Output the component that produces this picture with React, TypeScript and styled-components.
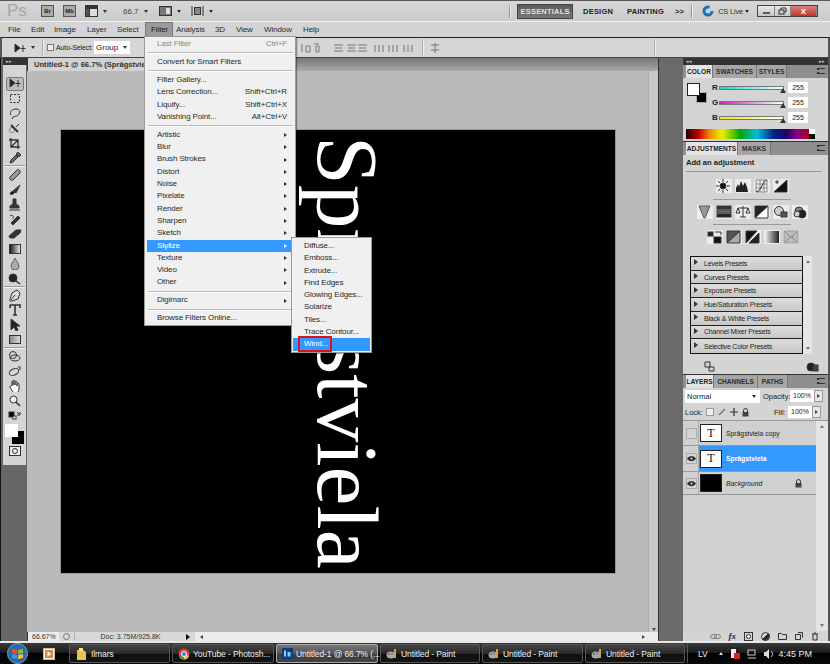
import React from "react";
import styled, { createGlobalStyle } from "styled-components";

const Global = createGlobalStyle`
  html, body { margin: 0; padding: 0; background: #000; }
  * { box-sizing: border-box; }
  #root { width: 830px; height: 664px; overflow: hidden; }
`;

const UI = `"Liberation Sans", Arial, sans-serif`;

const Screen = styled.div`
  position: relative;
  width: 830px;
  height: 664px;
  display: flex;
  flex-direction: column;
  font-family: ${UI};
  font-size: 9px;
  color: #222;
  overflow: hidden;
`;
const Win = styled.div`
  height: 643px;
  display: flex;
  flex-direction: column;
  background: #d2d2d2;
  border-top: 1px solid #5a5a5a;
  border-bottom: 2px solid #e8e8e8;
`;

/* ---------- title bar ---------- */
const TitleBar = styled.div`
  height: 21px;
  display: flex;
  align-items: center;
  background: linear-gradient(#d6d6d6, #cbcbcb);
  border-bottom: 1px solid #f0f0f0;
  position: relative;
`;
const PsLogo = styled.span`
  font: 17px ${UI};
  color: #a6a6a6;
  margin-left: 7px;
  width: 34px;
`;
const AppIconBtn = styled.span`
  width: 13px;
  height: 12px;
  margin-right: 9px;
  border: 1px solid #555;
  background: #aaa;
  font: bold 6px ${UI};
  color: #222;
  display: flex;
  align-items: center;
  justify-content: center;
`;
const TitleGroup = styled.div`
  display: flex;
  align-items: center;
  gap: 5px;
  margin-right: ${(p: { $mr: number }) => p.$mr}px;
  font-size: 8px;
  color: #444;
`;
const Caret = styled.span`
  width: 0;
  height: 0;
  flex: none;
  border-left: 2.5px solid transparent;
  border-right: 2.5px solid transparent;
  border-top: 3px solid ${(p: { $c?: string }) => p.$c || "#333"};
`;
const TitleSpacer = styled.div`
  flex: 1;
`;
const VRule = styled.span`
  width: 2px;
  height: 13px;
  background: #999;
  border-right: 1px solid #eee;
`;
const Workspace = styled.span<{ $on?: boolean; $ml: number }>`
  font: bold 7.5px ${UI};
  letter-spacing: 0.2px;
  margin-left: ${(p) => p.$ml}px;
  color: ${(p) => (p.$on ? "#e4e4e4" : "#222")};
  height: 15px;
  display: flex;
  align-items: center;
  justify-content: center;
  width: ${(p) => (p.$on ? "56px" : "auto")};
  background: ${(p) => (p.$on ? "linear-gradient(#5a5a5a,#777)" : "none")};
  border: ${(p) => (p.$on ? "1px solid #444" : "none")};
`;
const TitleRight = styled.div`
  display: flex;
  align-items: center;
`;
const TitleGap = styled.span<{ $w: number }>`
  width: ${(p) => p.$w}px;
  flex: none;
`;
const CsLive = styled.span`
  font-size: 7.5px;
  letter-spacing: -0.2px;
  color: #333;
  margin-left: 4px;
  display: flex;
  align-items: center;
  gap: 2px;
`;
const WinControls = styled.div`
  display: flex;
  height: 12px;
  margin: 0 12px 0 8px;
  border: 1px solid #444;
`;
const WinCtl = styled.span<{ $w: number; $red?: boolean }>`
  width: ${(p) => p.$w}px;
  display: flex;
  align-items: center;
  justify-content: center;
  color: #fff;
  font: bold 8px ${UI};
  background: ${(p) => (p.$red ? "linear-gradient(#d98080,#c8342c)" : "linear-gradient(#e8e8e8,#c4c4c4)")};
  border-right: 1px solid #888;
`;

/* ---------- menu bar ---------- */
const MenuBar = styled.div`
  height: 15px;
  display: flex;
  align-items: center;
  background: #d4d4d4;
  padding-left: 8px;
`;
const MenuItem = styled.span<{ $w: number; $on?: boolean }>`
  width: ${(p) => p.$w}px;
  height: 15px;
  line-height: 15px;
  font-size: 8px;
  letter-spacing: -0.1px;
  color: #2a2a2a;
  flex: none;
  ${(p) => p.$on && `background:#9a9a9a;border:1px solid #777;border-bottom:none;padding-left:5px;line-height:13px;color:#222;margin-left:-3px;margin-right:3px;`}
`;

/* ---------- options bar ---------- */
const OptionsBar = styled.div`
  height: 21px;
  display: flex;
  align-items: center;
  background: #d6d6d6;
  border-top: 1px solid #222;
  border-bottom: 1px solid #444;
  border-left: 2px solid #555;
  border-right: 2px solid #555;
  position: relative;
`;
const OptSep = styled.span<{ $ml: number }>`
  width: 2px;
  height: 17px;
  margin-left: ${(p) => p.$ml}px;
  background: #aaa;
  border-right: 1px solid #eee;
  flex: none;
`;
const CheckBox = styled.span`
  width: 7px;
  height: 7px;
  border: 1px solid #777;
  background: #eee;
  margin-left: 3px;
  flex: none;
`;
const OptLabel = styled.span`
  font-size: 7px;
  letter-spacing: -0.1px;
  margin-left: 2px;
  width: 38px;
  flex: none;
  white-space: nowrap;
`;
const GroupSelect = styled.span`
  width: 36px;
  height: 13px;
  background: #fff;
  display: flex;
  align-items: center;
  justify-content: space-between;
  padding: 0 3px 0 2px;
  font-size: 8px;
  flex: none;
`;
const AlignIcons = styled.svg<{ $ml: number }>`
  flex: none;
  margin-left: ${(p) => p.$ml}px;
`;
const OptEnd = styled.span`
  width: 172px;
  flex: none;
`;

/* ---------- workspace ---------- */
const Work = styled.div`
  flex: 1;
  display: flex;
  min-height: 0;
  background: #666;
`;
const ToolColumn = styled.div`
  width: 27px;
  flex: none;
  background: #666;
  border-left: 1px solid #111;
  padding-left: 2px;
`;
const PanelHead = styled.div`
  height: 7px;
  flex: none;
  background: #333;
  color: #ccc;
  font-size: 5px;
  line-height: 7px;
  padding: 0 3px;
  display: flex;
  justify-content: space-between;
`;
const Tools = styled.div`
  width: 23px;
  height: 400px;
  background: #d4d4d4;
  padding-top: 11.5px;
  display: flex;
  flex-direction: column;
  align-items: center;
`;
const ToolBtn = styled.span<{ $on?: boolean }>`
  width: 18px;
  height: 14.8px;
  flex: none;
  display: flex;
  align-items: center;
  justify-content: center;
  ${(p) => p.$on && `background:#bcbcbc;border:1px solid #777;border-radius:2px;`}
`;
const ToolSep = styled.span`
  width: 21px;
  height: 2px;
  background: #999;
  border-bottom: 1px solid #f2f2f2;
  flex: none;
`;
const Swatches = styled.div`
  position: relative;
  width: 19px;
  height: 20px;
  margin-top: 1px;
  flex: none;
`;
const SwatchBack = styled.span`
  position: absolute;
  right: 0;
  bottom: 0;
  width: 12px;
  height: 13px;
  background: #000;
`;
const SwatchFront = styled.span`
  position: absolute;
  left: 0;
  top: 0;
  width: 13px;
  height: 13px;
  background: #fff;
`;

const DocColumn = styled.div`
  flex: 1;
  min-width: 0;
  display: flex;
  flex-direction: column;
  background: #bababa;
`;
const DocTabs = styled.div`
  height: 13px;
  flex: none;
  display: flex;
  background: linear-gradient(#777, #a8a8a8);
`;
const DocTab = styled.div`
  width: 117px;
  padding-left: 6px;
  font-size: 7.6px;
  font-weight: bold;
  line-height: 13px;
  background: #d2d2d2;
  white-space: nowrap;
  color: #333;
  border-left: 1px solid #333;
`;
const CanvasRow = styled.div`
  flex: 1;
  min-height: 0;
  display: flex;
`;
const CanvasArea = styled.div`
  flex: 1;
  display: flex;
  align-items: center;
  justify-content: center;
`;
const Canvas = styled.div`
  position: relative;
  width: 554px;
  height: 443px;
  background: #000;
  box-shadow: 0 0 0 1px #999;
`;
const BigText = styled.div`
  position: absolute;
  left: 236px;
  top: 6px;
  writing-mode: vertical-rl;
  font: 87.5px/100px "Liberation Serif", "Times New Roman", serif;
  color: #fff;
  white-space: nowrap;
`;
const VScroll = styled.div`
  width: 10px;
  flex: none;
  background: #c8c8c8;
  border-left: 1px solid #aaa;
  display: flex;
  align-items: flex-end;
  justify-content: center;
  padding-bottom: 1px;
`;
const StatusBar = styled.div`
  height: 9px;
  flex: none;
  display: flex;
  align-items: center;
  background: #d8d8d8;
  border-left: 1px solid #333;
  font-size: 7px;
  color: #333;
  position: relative;
`;
const Zoom = styled.span`
  width: 31px;
  height: 9px;
  line-height: 9px;
  padding-left: 4px;
  background: #ececec;
  flex: none;
`;
const StatusDot = styled.span`
  width: 15px;
  display: flex;
  justify-content: center;
  flex: none;
`;
const DocInfo = styled.span`
  width: 112px;
  text-align: center;
  flex: none;
  border-left: 1px solid #aaa;
`;
const HScroll = styled.div`
  flex: 1;
  height: 9px;
  background: #ececec;
  display: flex;
  align-items: center;
  justify-content: space-between;
  padding: 0 13px 0 5px;
  margin-left: 5px;
`;
const Tri = styled.span<{ $dir: "l" | "r" | "u" | "d"; $s?: number; $c?: string }>`
  width: 0;
  height: 0;
  flex: none;
  ${(p) => {
    const s = p.$s || 2;
    const c = p.$c || "#444";
    if (p.$dir === "r") return `border-top:${s}px solid transparent;border-bottom:${s}px solid transparent;border-left:${s + 1}px solid ${c};`;
    if (p.$dir === "l") return `border-top:${s}px solid transparent;border-bottom:${s}px solid transparent;border-right:${s + 1}px solid ${c};`;
    if (p.$dir === "u") return `border-left:${s}px solid transparent;border-right:${s}px solid transparent;border-bottom:${s + 1}px solid ${c};`;
    return `border-left:${s}px solid transparent;border-right:${s}px solid transparent;border-top:${s + 1}px solid ${c};`;
  }}
`;

const IconStrip = styled.div`
  width: 25px;
  flex: none;
  background: #6a6a6a;
  border-left: 1px solid #333;
`;

/* ---------- right panels ---------- */
const Panels = styled.div`
  width: 147px;
  flex: none;
  background: #d4d4d4;
  display: flex;
  flex-direction: column;
  border-right: 2px solid #555;
`;
const Tabs = styled.div`
  height: 13px;
  display: flex;
  align-items: stretch;
  background: #8f8f8f;
  position: relative;
  flex: none;
  padding-left: 3px;
`;
const Tab = styled.span<{ $on?: boolean; $w: number }>`
  width: ${(p) => p.$w}px;
  font: bold 6.6px/13px ${UI};
  text-align: center;
  white-space: nowrap;
  color: ${(p) => (p.$on ? "#222" : "#2e2e2e")};
  background: ${(p) => (p.$on ? "#e4e4e4" : "#a6a6a6")};
  border-right: 1px solid #777;
  flex: none;
`;
const PanelMenu = styled.span`
  position: absolute;
  right: 3px;
  top: 3px;
  width: 8px;
  height: 6px;
  border-top: 1px solid #333;
  border-bottom: 1px solid #333;
  border-left: 2px dotted #333;
`;
const ColorBody = styled.div`
  height: 63px;
  display: flex;
  flex-direction: column;
  padding: 5px 0 0 4px;
  flex: none;
`;
const ColorTop = styled.div`
  display: flex;
  height: 46px;
`;
const Chips = styled.div`
  position: relative;
  width: 25px;
  flex: none;
`;
const ChipBack = styled.span`
  position: absolute;
  left: 9px;
  top: 9px;
  width: 11px;
  height: 11px;
  background: #000;
  border: 1px solid #aaa;
`;
const ChipFront = styled.span`
  position: absolute;
  left: 0;
  top: 0;
  width: 13px;
  height: 13px;
  background: #fff;
  border: 1px solid #222;
`;
const Sliders = styled.div`
  display: flex;
  flex-direction: column;
  gap: 4px;
  margin-top: -1px;
`;
const SliderRow = styled.div`
  display: flex;
  align-items: center;
  height: 11px;
`;
const SliderLetter = styled.span`
  width: 7px;
  font-weight: bold;
  font-size: 8px;
`;
const SliderTrack = styled.span<{ $c: string }>`
  position: relative;
  width: 65px;
  height: 4px;
  background: linear-gradient(90deg, ${(p) => p.$c}, #fff);
  border: 1px solid #777;
  flex: none;
`;
const Thumb = styled.span`
  position: absolute;
  right: -3px;
  top: 1px;
  width: 0;
  height: 0;
  border-left: 3px solid transparent;
  border-right: 3px solid transparent;
  border-bottom: 5px solid #333;
`;
const NumBox = styled.span`
  width: 20px;
  height: 11px;
  margin-left: 4px;
  background: #fff;
  font-size: 7px;
  line-height: 11px;
  text-align: center;
`;
const Ramp = styled.div`
  position: relative;
  width: 129px;
  height: 10px;
  margin-left: -1px;
  background: linear-gradient(90deg, #200 0%, #c00 10%, #e80 18%, #ee0 28%, #0a0 42%, #0bd 55%, #028 68%, #206 78%, #808 86%, #a00 97%);
`;
const RampEnd = styled.span`
  position: absolute;
  right: 0;
  top: 0;
  width: 6px;
  height: 10px;
  background: linear-gradient(#fff 50%, #000 50%);
`;
const DarkRule = styled.div`
  height: 1px;
  background: #333;
  flex: none;
`;
const AdjBody = styled.div`
  height: 219px;
  display: flex;
  flex-direction: column;
  flex: none;
`;
const AdjTitle = styled.div`
  font: bold 7.6px/12px ${UI};
  padding: 1px 0 0 3px;
  height: 15px;
  margin-top: 1px;
`;
const AdjRule = styled.div<{ $w: number; $ml: number; $mt: number }>`
  height: 1px;
  width: ${(p) => p.$w}px;
  margin: ${(p) => p.$mt}px 0 0 ${(p) => p.$ml}px;
  background: #999;
  flex: none;
`;
const AdjRow = styled.div<{ $mt: number }>`
  display: flex;
  justify-content: center;
  gap: 3px;
  margin: ${(p) => p.$mt}px 6px 0 0;
  height: 14px;
  flex: none;
`;
const AdjIcon = styled.span`
  width: 16px;
  height: 14px;
  background: #ececec;
  display: flex;
  align-items: center;
  justify-content: center;
  flex: none;
`;
const PresetWrap = styled.div`
  display: flex;
  margin: 12px 0 0 7px;
  flex: none;
`;
const PresetList = styled.div`
  width: 113px;
  border: 1px solid #111;
`;
const PresetRow = styled.div`
  height: 13.72px;
  border-bottom: 1px solid #222;
  background: linear-gradient(#dcdcdc, #c8c8c8);
  display: flex;
  align-items: center;
  font-size: 7px;
  letter-spacing: -0.2px;
  color: #222;
  &:last-child { border-bottom: none; }
`;
const PresetArrow = styled.span`
  width: 13px;
  padding-left: 3px;
  display: flex;
  flex: none;
  margin-top: -2px;
`;
const MiniScroll = styled.div`
  width: 9px;
  background: #e6e6e6;
  display: flex;
  flex-direction: column;
  justify-content: space-between;
  align-items: center;
  padding: 4px 0;
`;
const AdjFooter = styled.div`
  display: flex;
  justify-content: space-between;
  padding: 0 9px 0 21px;
  margin-top: 7px;
  height: 11px;
  flex: none;
`;
const LayersBody = styled.div`
  flex: 1;
  display: flex;
  flex-direction: column;
  min-height: 0;
`;
const BlendRow = styled.div`
  height: 16px;
  display: flex;
  align-items: center;
  padding-left: 2px;
  flex: none;
  font-size: 7.5px;
`;
const BlendSelect = styled.span`
  width: 75px;
  height: 13px;
  background: #fff;
  padding: 0 4px 0 2px;
  display: flex;
  align-items: center;
  justify-content: space-between;
  flex: none;
  margin-right: 3px;
`;
const SmallLabel = styled.span<{ $w: number }>`
  width: ${(p) => p.$w}px;
  flex: none;
  white-space: nowrap;
`;
const PctBox = styled.span`
  width: 24px;
  height: 12px;
  line-height: 12px;
  font-size: 7px;
  background: #fff;
  text-align: center;
  flex: none;
`;
const PctBtn = styled.span`
  width: 9px;
  height: 12px;
  background: #e8e8e8;
  border: 1px solid #999;
  display: flex;
  align-items: center;
  justify-content: center;
  flex: none;
`;
const LockRow = styled(BlendRow)`
  border-bottom: 1px solid #999;
  height: 17px;
`;
const LockIcons = styled.div`
  display: flex;
  align-items: center;
  gap: 4px;
  margin-left: 3px;
  width: 68px;
  flex: none;
`;
const LayersScroll = styled.div`
  flex: 1;
  min-height: 0;
  display: flex;
`;
const LayerList = styled.div`
  flex: 1;
  background: #d0d0d0;
`;
const LayerRow = styled.div<{ $h: number }>`
  height: ${(p) => p.$h}px;
  display: flex;
  align-items: center;
  border-bottom: 1px solid #999;
`;
const EyeCell = styled.span`
  width: 15px;
  flex: none;
  display: flex;
  justify-content: center;
  padding-left: 2px;
`;
const EyeBox = styled.span`
  width: 11px;
  height: 11px;
  background: #d4d4d4;
  border: 1px solid #aaa;
  display: flex;
  align-items: center;
  justify-content: center;
`;
const LayerMain = styled.div<{ $on?: boolean }>`
  flex: 1;
  height: 100%;
  display: flex;
  align-items: center;
  padding-left: 1px;
  border-left: 1px solid #aaa;
  position: relative;
  background: ${(p) => (p.$on ? "#3399ff" : "none")};
`;
const Thumbnail = styled.span<{ $black?: boolean; $on?: boolean }>`
  width: 22px;
  height: 18px;
  border: 1px solid #222;
  background: ${(p) => (p.$black ? "#000" : "#fff")};
  display: flex;
  align-items: center;
  justify-content: center;
  font: 12px "Liberation Serif", serif;
  color: #111;
  flex: none;
  ${(p) => p.$on && `outline:1px solid #fff;outline-offset:-2px;`}
`;
const LayerName = styled.span<{ $on?: boolean; $italic?: boolean }>`
  margin-left: 4px;
  font-size: 6.8px;
  font-weight: ${(p) => (p.$on ? "bold" : "normal")};
  font-style: ${(p) => (p.$italic ? "italic" : "normal")};
  color: ${(p) => (p.$on ? "#fff" : "#222")};
`;
const LockBadge = styled.span`
  position: absolute;
  right: 14px;
  top: 7px;
`;
const ScrollCol = styled.div`
  width: 12px;
  background: #e4e4e4;
  flex: none;
  display: flex;
  flex-direction: column;
  justify-content: space-between;
  align-items: center;
  padding: 4px 0;
`;
const LayersFooter = styled.div`
  height: 10px;
  display: flex;
  align-items: center;
  justify-content: flex-end;
  gap: 8px;
  padding-right: 9px;
  background: #d4d4d4;
  flex: none;
  font: italic bold 9px "Liberation Serif", serif;
`;

/* ---------- taskbar ---------- */
const Taskbar = styled.div`
  flex: 1;
  display: flex;
  align-items: center;
  background: linear-gradient(#3a3a3a 0%, #1c1c1c 45%, #000 50%, #0a0a0a 100%);
`;
const Orb = styled.span`
  width: 25px;
  height: 21px;
  margin: 0 13px 0 5px;
  display: flex;
  flex: none;
`;
const Quick = styled.span`
  width: 26px;
  flex: none;
  display: flex;
`;
const TaskBtn = styled.div<{ $on?: boolean; $w: number }>`
  width: ${(p) => p.$w}px;
  height: 19px;
  margin-right: 2px;
  flex: none;
  display: flex;
  align-items: center;
  gap: 3px;
  padding-left: 5px;
  font-size: 8.5px;
  letter-spacing: -0.1px;
  color: #eee;
  white-space: nowrap;
  border: 1px solid ${(p) => (p.$on ? "#aaa" : "#555")};
  border-radius: 2px;
  background: ${(p) =>
    p.$on
      ? "linear-gradient(#777,#555 50%,#3c3c3c 50%,#444)"
      : "linear-gradient(#444,#2a2a2a 50%,#0c0c0c 50%,#161616)"};
`;
const Tray = styled.div`
  flex: 1;
  height: 19px;
  display: flex;
  align-items: center;
  color: #eee;
  font-size: 8.5px;
  border-left: 1px solid #555;
  padding-left: 10px;
`;
const TrayClock = styled.span`
  margin-left: auto;
  margin-right: 18px;
  font-size: 9px;
`;
const TrayIcons = styled.div`
  display: flex;
  align-items: center;
  gap: 7px;
  margin-left: 11px;
`;

/* ---------- menus (over content) ---------- */
const Menu = styled.div<{ $x: number; $y: number; $w: number; $h: number; $pt: number }>`
  position: absolute;
  left: ${(p) => p.$x}px;
  top: ${(p) => p.$y}px;
  width: ${(p) => p.$w}px;
  height: ${(p) => p.$h}px;
  background: #f0f0f0;
  border: 1px solid #999;
  box-shadow: 1px 1px 1px rgba(0, 0, 0, 0.35);
  font-size: 8px;
  letter-spacing: -0.12px;
  color: #2a2a2a;
  padding-top: ${(p) => p.$pt}px;
  z-index: 2;
`;
const Row = styled.div<{ $on?: boolean; $off?: boolean; $pl?: number }>`
  height: 12.3px;
  line-height: 12.3px;
  margin: 0 2px;
  padding: 0 6px 0 ${(p) => p.$pl ?? 10}px;
  display: flex;
  justify-content: space-between;
  align-items: center;
  white-space: nowrap;
  color: ${(p) => (p.$off ? "#8a8a8a" : p.$on ? "#fff" : "#2a2a2a")};
  background: ${(p) => (p.$on ? "#3399ff" : "none")};
`;
const Sep = styled.div`
  height: 2px;
  margin: 1.85px 2px 1.85px 3px;
  background: #bbb;
  border-bottom: 1px solid #fff;
`;
const WindRow = styled(Row)`
  margin: 0 1px;
  position: relative;
`;
const RedBox = styled.span`
  position: absolute;
  left: 5px;
  top: -2px;
  width: 34px;
  height: 16px;
  border: 2.5px solid #e0101c;
`;

/* ---------- icons ---------- */
const Svg = ({ w = 14, h = 13, children }: { w?: number; h?: number; children: React.ReactNode }) => (
  <svg width={w} height={h} viewBox={`0 0 ${w} ${h}`} fill="none" stroke="#333" strokeWidth="1">
    {children}
  </svg>
);

const toolShapes: Record<string, React.ReactNode> = {
  move: <><path d="M2 2l5 4-5 4z" fill="#222" /><path d="M10 3v7M7.500 6.500h5" /></>,
  marquee: <rect x="2.500" y="2.500" width="9" height="8" strokeDasharray="2 1.500" />,
  lasso: <path d="M3 8C1 4 5 2 8 2s5 2 3 5-5 2-6 3l-1 2" />,
  quick: <><path d="M3 3l7 7" strokeWidth="2" /><circle cx="4" cy="8" r="2.500" strokeDasharray="1 1" /><path d="M11 2l-3 3" /></>,
  crop: <path d="M3 1v9h9M1 3h9v9M3 10l7-7" strokeWidth="1.300" />,
  drop: <path d="M2 12l1-3 5-5 2 2-5 5zM8 3l2-2 3 3-2 2z" fill="#666" />,
  heal: <path d="M2 9l7-7c2-1 4 1 3 3l-7 7c-2 1-4-1-3-3z" fill="#999" />,
  brush: <><path d="M5 8l7-6-4 8z" fill="#333" /><path d="M2 11c1-3 3-3 4-2s-1 3-4 2z" fill="#111" /></>,
  stamp: <path d="M5 1h3v5l3 2v2H2V8l3-2zM1 12h11" fill="#333" />,
  history: <><path d="M3 10l7-7 2 2-7 7z" fill="#333" /><path d="M2 3c3-2 4 1 3 3" /></>,
  eraser: <path d="M1 9l7-6h5l-1 3-6 5H2z" fill="#333" />,
  gradient: <><defs><linearGradient id="tg"><stop offset="0" stopColor="#111" /><stop offset="1" stopColor="#eee" /></linearGradient></defs><rect x="1.500" y="2.500" width="11" height="9" fill="url(#tg)" /></>,
  blur: <path d="M7 1c1 3 4 5 4 8a4 4 0 01-8 0c0-3 3-5 4-8z" fill="#aaa" stroke="#666" />,
  burn: <><circle cx="5" cy="6" r="4" fill="#222" /><path d="M8 9l4 3" strokeWidth="1.500" /></>,
  pen: <path d="M9 1l3 3-2 6-6 2-2 0 0-2 2-6zM3 11l4-5" fill="#ddd" />,
  type: <path d="M2 2h10v3M2 2v3M7 2v10M5 12h4" strokeWidth="1.600" />,
  arrow: <path d="M3 1l9 7-4 0 2 4-2 1-2-4-3 3z" fill="#222" />,
  rect: <><defs><linearGradient id="tr"><stop offset="0" stopColor="#888" /><stop offset="1" stopColor="#ddd" /></linearGradient></defs><rect x="1.500" y="2.500" width="11" height="8" fill="url(#tr)" /></>,
  rot: <><circle cx="5" cy="5" r="3.500" /><ellipse cx="7" cy="8" rx="5" ry="3" /></>,
  orbit: <><ellipse cx="6" cy="7" rx="5" ry="3" transform="rotate(-25 6 7)" /><path d="M10 2h3M11 4h2" /></>,
  hand: <path d="M4 7V3c0-1 1-1 1 0v3-4c0-1 2-1 2 0v4-3c0-1 2-1 2 0v4-2c0-1 2-1 2 0v5c0 3-2 4-4 4S4 11 2 8c0-1 1-2 2-1z" fill="#fff" />,
  zoom: <><circle cx="5.500" cy="5.500" r="3.500" fill="#eee" /><path d="M8 8l4 4" strokeWidth="1.600" /></>,
  mini: <><rect x="1" y="3" width="5" height="5" fill="#000" /><rect x="5" y="7" width="3" height="3" fill="#fff" /><path d="M9 3l3 3M12 3v3H9" /></>,
};

const Tool = ({ n, on }: { n: string; on?: boolean }) => (
  <ToolBtn $on={on}>
    <Svg>{toolShapes[n]}</Svg>
  </ToolBtn>
);

const adjIcons: React.ReactNode[][] = [
  [
    <><circle cx="7" cy="7" r="3" fill="#111" /><path d="M7 0v3M7 11v3M0 7h3M11 7h3M2 2l2 2M10 10l2 2M2 12l2-2M10 4l2-2" /></>,
    <path d="M1 13V9l2-4 1 3 2-6 2 5 2-4 2 5 1 5z" fill="#222" stroke="none" />,
    <><path d="M2 1h11v12H2zM2 5h11M2 9h11M6 1v12M10 1v12" stroke="#888" /><path d="M2 13c6-1 6-11 11-12" /></>,
    <><path d="M1 13L14 1v12z" fill="#111" /><path d="M2 3h4M4 1v4" /></>,
  ],
  [
    <path d="M2 1h11L8 13H7z" fill="#999" stroke="#555" />,
    <><rect x="1" y="1" width="14" height="3" fill="#333" /><rect x="1" y="5" width="14" height="3" fill="#777" /><rect x="1" y="9" width="14" height="3" fill="#222" /></>,
    <path d="M8 1v11M3 3h10M3 3l-2 5h4zM13 3l-2 5h4zM5 12h6" />,
    <><path d="M1 13L14 1H1z" fill="#222" /><path d="M14 1v12H1z" fill="#fff" /></>,
    <><circle cx="6" cy="6" r="4.500" fill="#ccc" /><rect x="8" y="7" width="6" height="5" fill="#555" /></>,
    <><circle cx="7" cy="6" r="4" fill="#888" /><circle cx="10" cy="9" r="4" fill="#222" /><circle cx="5" cy="9" r="3" fill="#ccc" /></>,
  ],
  [
    <><rect x="1" y="2" width="5" height="4" fill="#222" /><rect x="7" y="7" width="7" height="6" fill="#111" /><path d="M8 2h6v3" /></>,
    <><path d="M1 13L14 1H1z" fill="#555" /><path d="M14 1v12H1z" fill="#aaa" /></>,
    <><path d="M1 13L12 1H1z" fill="#111" /><path d="M14 3L4 13h10z" fill="#222" /></>,
    <><defs><linearGradient id="ag"><stop offset="0" stopColor="#eee" /><stop offset="1" stopColor="#222" /></linearGradient></defs><rect x="1" y="1" width="14" height="12" fill="url(#ag)" stroke="none" /></>,
    <path d="M1 1l6 6-6 6zM15 1l-6 6 6 6zM1 1h14L8 7zM1 13h14L8 7z" fill="#bbb" stroke="#999" />,
  ],
];

const presets = ["Levels Presets", "Curves Presets", "Exposure Presets", "Hue/Saturation Presets", "Black & White Presets", "Channel Mixer Presets", "Selective Color Presets"];

const Eye = () => (
  <svg width="9" height="7" viewBox="0 0 9 7">
    <path d="M0 3.500C2 0 7 0 9 3.500 7 7 2 7 0 3.500z" fill="#333" />
    <circle cx="4.500" cy="3.500" r="1" fill="#ddd" />
  </svg>
);
const Padlock = () => (
  <svg width="7" height="9" viewBox="0 0 7 9">
    <path d="M1.500 4V2.500a2 2 0 014 0V4" fill="none" stroke="#333" />
    <rect x="0.500" y="4" width="6" height="4.500" fill="#444" />
  </svg>
);
const PaintIcon = () => (
  <svg width="12" height="12" viewBox="0 0 12 12" style={{ flex: "none" }}>
    <ellipse cx="5" cy="7" rx="4.500" ry="3.500" fill="#9ab0a8" />
    <circle cx="3" cy="6" r="1" fill="#d33" />
    <circle cx="6" cy="5.500" r="1" fill="#38c" />
    <rect x="8" y="1" width="2" height="9" fill="#d9a13a" />
  </svg>
);

const fileItems: React.ReactNode = (
  <svg width="13" height="14" viewBox="0 0 13 14" style={{ flex: "none" }}>
    <path d="M2 3h6l3 2v8H2z" fill="#e8c34a" />
    <path d="M4 1h4v3H4z" fill="#f4e7a6" />
  </svg>
);

const rows1 = ["Artistic", "Blur", "Brush Strokes", "Distort", "Noise", "Pixelate", "Render", "Sharpen", "Sketch", "Stylize", "Texture", "Video", "Other"];
const rows2 = ["Diffuse...", "Emboss...", "Extrude...", "Find Edges", "Glowing Edges...", "Solarize", "Tiles...", "Trace Contour..."];
const menus: [string, number, boolean?][] = [
  ["File", 23], ["Edit", 23], ["Image", 33], ["Layer", 30], ["Select", 31], ["Filter", 28, true],
  ["Analysis", 39], ["3D", 21], ["View", 28], ["Window", 39], ["Help", 20],
];

export default function App() {
  return (
    <Screen>
      <Global />
      <Win>
        <TitleBar>
          <PsLogo>Ps</PsLogo>
          <AppIconBtn>Br</AppIconBtn>
          <AppIconBtn>Mb</AppIconBtn>
          <TitleGroup $mr={16}>
            <Svg w={13} h={12}><rect x="0.500" y="0.500" width="12" height="11" fill="#ddd" /><rect x="0.500" y="0.500" width="12" height="3" fill="#333" /><rect x="0.500" y="3.500" width="4" height="8" fill="#555" /></Svg>
            <Caret />
          </TitleGroup>
          <TitleGroup $mr={11}>66.7 <Caret /></TitleGroup>
          <TitleGroup $mr={10}>
            <Svg w={13} h={12}><rect x="0.500" y="1.500" width="12" height="9" fill="#777" /><rect x="7" y="3" width="4" height="6" fill="#ddd" stroke="none" /></Svg>
            <Caret />
          </TitleGroup>
          <TitleGroup $mr={0}>
            <Svg w={13} h={12}><path d="M1 1v10M12 1v10" /><rect x="3.500" y="2.500" width="6" height="7" fill="#888" /></Svg>
            <Caret />
          </TitleGroup>
          <TitleSpacer />
          <TitleRight>
            <VRule />
            <Workspace $on $ml={6}>ESSENTIALS</Workspace>
            <Workspace $ml={10}>DESIGN</Workspace>
            <Workspace $ml={14}>PAINTING</Workspace>
            <Workspace $ml={11}>&gt;&gt;</Workspace>
            <TitleGap $w={7} />
            <VRule />
            <TitleGap $w={9} />
            <Svg w={12} h={12}><circle cx="6" cy="6" r="4" stroke="#1277b8" strokeWidth="3" strokeDasharray="20 6" /></Svg>
            <CsLive>CS Live <Caret /></CsLive>
            <WinControls>
              <WinCtl $w={17}><Svg w={9} h={5}><path d="M1 4h7" strokeWidth="1.500" /></Svg></WinCtl>
              <WinCtl $w={16}><Svg w={9} h={8}><rect x="1" y="3" width="5" height="4" /><path d="M3 3V1h5v4H6" /></Svg></WinCtl>
              <WinCtl $w={26} $red>X</WinCtl>
            </WinControls>
          </TitleRight>
        </TitleBar>
        <MenuBar>
          {menus.map(([t, w, on]) => (
            <MenuItem key={t} $w={w} $on={on}>{t}</MenuItem>
          ))}
        </MenuBar>
        <OptionsBar>
          <TitleGap $w={11} />
          <Svg w={14} h={12}>{toolShapes.move}</Svg>
          <TitleGap $w={4} />
          <Caret />
          <OptSep $ml={7} />
          <CheckBox />
          <OptLabel>Auto-Select:</OptLabel>
          <GroupSelect>Group <Caret /></GroupSelect>
          <AlignIcons $ml={170} width="122" height="12" viewBox="0 0 122 12" stroke="#777" fill="none">
            <path d="M2 2v8M6 4h4v6H6zM14 2h5M16 4h3v6h-3z" />
            <path d="M34 3h9M35 6h7M34 9h9M47 3h9M48 6h7M47 9h9M58 3h9M59 6h7M58 9h9" />
            <path d="M75 3v7M79 3v7M83 3v7M89 3v7M93 3v7M97 3v7M104 3v7M108 3v7M112 3v7" />
          </AlignIcons>
          <OptSep $ml={0} />
          <AlignIcons $ml={5} width="12" height="12" viewBox="0 0 12 12" stroke="#777" fill="none"><path d="M6 1v10M2 3h8M2 8h8" /></AlignIcons>
          <TitleSpacer />
          <OptSep $ml={0} />
          <OptEnd />
        </OptionsBar>
        <Work>
          <ToolColumn>
            <PanelHead>▸▸</PanelHead>
            <Tools>
              <Tool n="move" on />
              <Tool n="marquee" />
              <Tool n="lasso" />
              <Tool n="quick" />
              <Tool n="crop" />
              <Tool n="drop" />
              <ToolSep />
              <Tool n="heal" />
              <Tool n="brush" />
              <Tool n="stamp" />
              <Tool n="history" />
              <Tool n="eraser" />
              <Tool n="gradient" />
              <Tool n="blur" />
              <Tool n="burn" />
              <ToolSep />
              <Tool n="pen" />
              <Tool n="type" />
              <Tool n="arrow" />
              <Tool n="rect" />
              <ToolSep />
              <Tool n="rot" />
              <Tool n="orbit" />
              <Tool n="hand" />
              <Tool n="zoom" />
              <Tool n="mini" />
              <Swatches><SwatchBack /><SwatchFront /></Swatches>
              <ToolBtn>
                <Svg w={14} h={12}><rect x="1.500" y="1.500" width="11" height="9" fill="#eee" /><circle cx="7" cy="6" r="2.500" /></Svg>
              </ToolBtn>
            </Tools>
          </ToolColumn>
          <DocColumn>
            <DocTabs>
              <DocTab>Untitled-1 @ 66.7% (Sprāgstviela</DocTab>
            </DocTabs>
            <CanvasRow>
              <CanvasArea>
                <Canvas>
                  <BigText>Sprāgstviela</BigText>
                </Canvas>
              </CanvasArea>
              <VScroll><Tri $dir="d" /></VScroll>
            </CanvasRow>
            <StatusBar>
              <Zoom>66.67%</Zoom>
              <StatusDot><Svg w={7} h={7}><circle cx="3.500" cy="3.500" r="3" stroke="#777" /></Svg></StatusDot>
              <DocInfo>Doc: 3.75M/925.8K</DocInfo>
              <Tri $dir="r" $s={3} $c="#000" />
              <HScroll><Tri $dir="l" /><Tri $dir="r" /></HScroll>
            </StatusBar>
          </DocColumn>
          <IconStrip />
          <Panels>
            <PanelHead><span>◂◂</span><span>▸▸</span></PanelHead>
            <Tabs>
              <Tab $on $w={27}>COLOR</Tab>
              <Tab $w={44}>SWATCHES</Tab>
              <Tab $w={30}>STYLES</Tab>
              <PanelMenu />
            </Tabs>
            <ColorBody>
              <ColorTop>
                <Chips><ChipBack /><ChipFront /></Chips>
                <Sliders>
                  {[["R", "#12d4d4"], ["G", "#d61fc0"], ["B", "#efe60f"]].map(([l, c]) => (
                    <SliderRow key={l}>
                      <SliderLetter>{l}</SliderLetter>
                      <SliderTrack $c={c}><Thumb /></SliderTrack>
                      <NumBox>255</NumBox>
                    </SliderRow>
                  ))}
                </Sliders>
              </ColorTop>
              <Ramp><RampEnd /></Ramp>
            </ColorBody>
            <DarkRule />
            <Tabs>
              <Tab $on $w={52}>ADJUSTMENTS</Tab>
              <Tab $w={33}>MASKS</Tab>
              <PanelMenu />
            </Tabs>
            <AdjBody>
              <AdjTitle>Add an adjustment</AdjTitle>
              <AdjRule $w={136} $ml={3} $mt={0} />
              {adjIcons.map((row, i) => (
                <React.Fragment key={i}>
                  <AdjRow $mt={i === 0 ? 7 : 5}>
                    {row.map((ic, j) => (
                      <AdjIcon key={j}><Svg w={16} h={14}>{ic}</Svg></AdjIcon>
                    ))}
                  </AdjRow>
                  {i < 2 && <AdjRule $w={78} $ml={30} $mt={5.5} />}
                </React.Fragment>
              ))}
              <PresetWrap>
                <PresetList>
                  {presets.map((p) => (
                    <PresetRow key={p}>
                      <PresetArrow><Tri $dir="r" $s={3} $c="#334" /></PresetArrow>
                      {p}
                    </PresetRow>
                  ))}
                </PresetList>
                <MiniScroll><Tri $dir="u" $c="#777" /><Tri $dir="d" $c="#777" /></MiniScroll>
              </PresetWrap>
              <AdjFooter>
                <Svg w={11} h={11}><path d="M1 1h5v5H1zM5 6h5v4H5z" /></Svg>
                <Svg w={13} h={11}><circle cx="5" cy="6" r="4" fill="#222" /><rect x="7" y="4" width="5" height="6" fill="#444" /></Svg>
              </AdjFooter>
            </AdjBody>
            <DarkRule />
            <Tabs>
              <Tab $on $w={28}>LAYERS</Tab>
              <Tab $w={44}>CHANNELS</Tab>
              <Tab $w={30}>PATHS</Tab>
              <PanelMenu />
            </Tabs>
            <LayersBody>
              <BlendRow>
                <BlendSelect>Normal <Caret /></BlendSelect>
                <SmallLabel $w={27}>Opacity:</SmallLabel>
                <PctBox>100%</PctBox>
                <PctBtn><Tri $dir="r" /></PctBtn>
              </BlendRow>
              <LockRow>
                <SmallLabel $w={18}>Lock:</SmallLabel>
                <LockIcons>
                  <Svg w={8} h={8}><rect x="0.500" y="0.500" width="7" height="7" fill="#eee" stroke="#999" /></Svg>
                  <Svg w={8} h={8}><path d="M1 7l6-6" stroke="#777" strokeWidth="1.500" /></Svg>
                  <Svg w={8} h={8}><path d="M4 0v8M0 4h8" strokeWidth="1.200" /></Svg>
                  <Padlock />
                </LockIcons>
                <SmallLabel $w={14}>Fill:</SmallLabel>
                <PctBox>100%</PctBox>
                <PctBtn><Tri $dir="r" /></PctBtn>
              </LockRow>
              <LayersScroll>
                <LayerList>
                  <LayerRow $h={25}>
                    <EyeCell><EyeBox /></EyeCell>
                    <LayerMain><Thumbnail>T</Thumbnail><LayerName>Sprāgstviela copy</LayerName></LayerMain>
                  </LayerRow>
                  <LayerRow $h={26}>
                    <EyeCell><EyeBox><Eye /></EyeBox></EyeCell>
                    <LayerMain $on><Thumbnail $on>T</Thumbnail><LayerName $on>Sprāgstviela</LayerName></LayerMain>
                  </LayerRow>
                  <LayerRow $h={23}>
                    <EyeCell><EyeBox><Eye /></EyeBox></EyeCell>
                    <LayerMain><Thumbnail $black /><LayerName $italic>Background</LayerName><LockBadge><Padlock /></LockBadge></LayerMain>
                  </LayerRow>
                </LayerList>
                <ScrollCol><Tri $dir="u" $c="#777" /><Tri $dir="d" $c="#777" /></ScrollCol>
              </LayersScroll>
              <LayersFooter>
                <Svg w={11} h={7}><ellipse cx="3.500" cy="3.500" rx="3" ry="2" stroke="#777" /><ellipse cx="7.500" cy="3.500" rx="3" ry="2" stroke="#777" /></Svg>
                <span>fx</span>
                <Svg w={9} h={9}><rect x="0.500" y="0.500" width="8" height="8" /><circle cx="4.500" cy="4.500" r="2" fill="#fff" /></Svg>
                <Svg w={9} h={9}><circle cx="4.500" cy="4.500" r="4" /><path d="M1.500 7.500l6-6 1 3-3 3.500z" fill="#222" /></Svg>
                <Svg w={9} h={8}><path d="M0.500 1.500h3l1 1h4v5h-8z" /></Svg>
                <Svg w={8} h={8}><path d="M0.500 2.500h5v5h-5zM3 0.500h4.500v5" /></Svg>
                <Svg w={8} h={9}><path d="M1 2h6M2 2v6h4V2M3 1h2" /></Svg>
              </LayersFooter>
            </LayersBody>
          </Panels>
        </Work>
      </Win>
      <Taskbar>
        <Orb>
          <svg width="25" height="21" viewBox="0 0 25 21">
            <circle cx="12.500" cy="10.500" r="10" fill="#2a6aa8" stroke="#7aa" />
            <path d="M7 6l5 1v4l-5-1z" fill="#e2512c" />
            <path d="M13 7l5-1v4l-5 1z" fill="#7fc241" />
            <path d="M7 11l5 1v4l-5-1z" fill="#3b9be0" />
            <path d="M13 12l5-1v4l-5 1z" fill="#f5c12c" />
          </svg>
        </Orb>
        <Quick>
          <svg width="12" height="12" viewBox="0 0 12 12">
            <rect x="0.500" y="0.500" width="11" height="11" fill="#f5f5f5" stroke="#bbb" />
            <path d="M2 2h8v8H2z" fill="#e8842a" />
            <path d="M4.500 3.500l4 2.500-4 2.500z" fill="#fff" />
          </svg>
        </Quick>
        <TaskBtn $w={101}>{fileItems}Ilmars</TaskBtn>
        <TaskBtn $w={102}>
          <svg width="12" height="12" viewBox="0 0 12 12" style={{ flex: "none" }}>
            <circle cx="6" cy="6" r="5.500" fill="#d8443a" />
            <path d="M6 6L1 9a5.500 5.500 0 005 2.500z" fill="#4a9c4a" />
            <path d="M6 6l5 2a5.500 5.500 0 01-5 3.500z" fill="#f2c53a" />
            <circle cx="6" cy="6" r="2.500" fill="#3a7fd8" stroke="#fff" />
          </svg>
          YouTube - Photosh...
        </TaskBtn>
        <TaskBtn $w={102} $on>
          <svg width="11" height="11" viewBox="0 0 11 11" style={{ flex: "none" }}>
            <rect width="11" height="11" fill="#0d3f78" />
            <rect x="2" y="2.500" width="2" height="6" fill="#8cc7ff" />
            <rect x="5.500" y="4" width="3" height="4.500" fill="#8cc7ff" />
          </svg>
          Untitled-1 @ 66.7% (...
        </TaskBtn>
        <TaskBtn $w={100}><PaintIcon />Untitled - Paint</TaskBtn>
        <TaskBtn $w={101}><PaintIcon />Untitled - Paint</TaskBtn>
        <TaskBtn $w={100}><PaintIcon />Untitled - Paint</TaskBtn>
        <Tray>
          LV
          <TrayIcons>
            <Tri $dir="u" $c="#ddd" />
            <svg width="10" height="11" viewBox="0 0 10 11">
              <path d="M1 1h5v9H1z" fill="#eee" />
              <rect x="4" y="5" width="6" height="6" fill="#d22" />
            </svg>
            <svg width="10" height="10" viewBox="0 0 10 10" fill="none" stroke="#ccc">
              <rect x="1" y="1" width="7" height="5" />
              <path d="M1 9h8" />
            </svg>
            <svg width="10" height="10" viewBox="0 0 10 10" fill="#ddd">
              <path d="M0 3h2l3-3v10L2 7H0z" />
              <path d="M7 2c2 2 2 4 0 6" fill="none" stroke="#ddd" />
            </svg>
          </TrayIcons>
          <TrayClock>4:45 PM</TrayClock>
        </Tray>
      </Taskbar>

      <Menu $x={144} $y={36} $w={152} $h={290} $pt={1}>
        <Row $off>Last Filter <span>Ctrl+F</span></Row>
        <Sep />
        <Row>Convert for Smart Filters</Row>
        <Sep />
        <Row>Filter Gallery...</Row>
        <Row>Lens Correction... <span>Shift+Ctrl+R</span></Row>
        <Row>Liquify... <span>Shift+Ctrl+X</span></Row>
        <Row>Vanishing Point... <span>Alt+Ctrl+V</span></Row>
        <Sep />
        {rows1.map((r) => (
          <Row key={r} $on={r === "Stylize"}>
            {r} <Tri $dir="r" $c={r === "Stylize" ? "#fff" : "#333"} />
          </Row>
        ))}
        <Sep />
        <Row>Digimarc <Tri $dir="r" $c="#333" /></Row>
        <Sep />
        <Row>Browse Filters Online...</Row>
      </Menu>
      <Menu $x={291} $y={237} $w={81} $h={116} $pt={2}>
        {rows2.map((r) => (
          <Row key={r} $pl={10}>{r}</Row>
        ))}
        <WindRow $on $pl={11}>Wind...<RedBox /></WindRow>
      </Menu>
    </Screen>
  );
}
